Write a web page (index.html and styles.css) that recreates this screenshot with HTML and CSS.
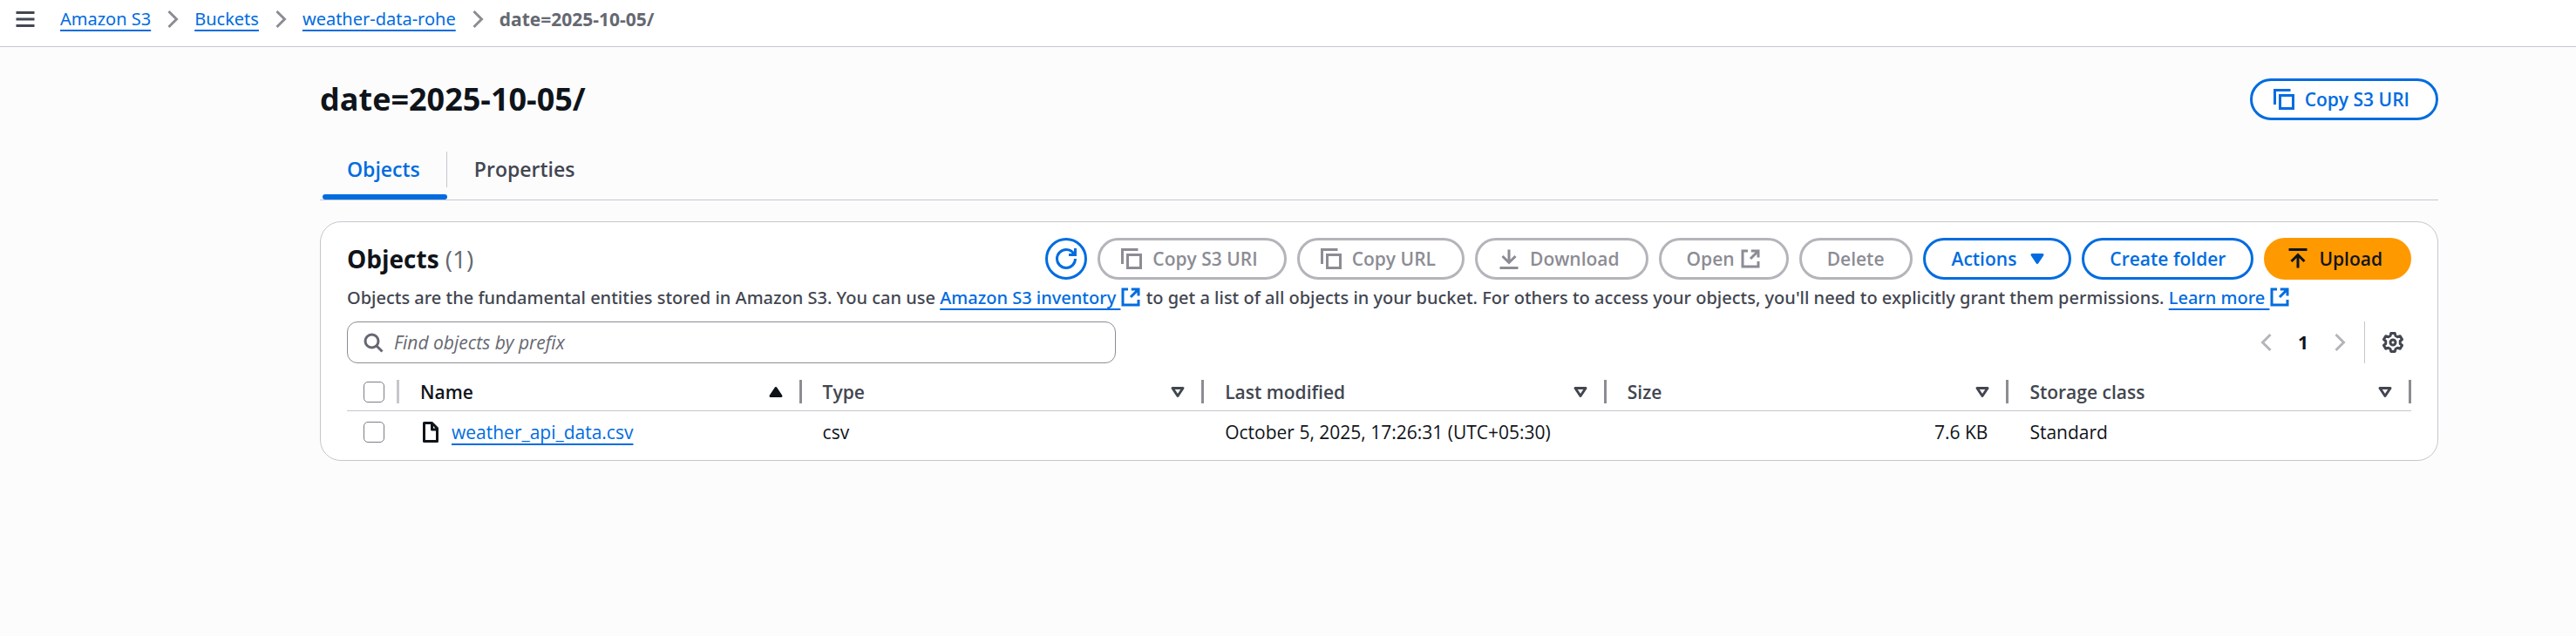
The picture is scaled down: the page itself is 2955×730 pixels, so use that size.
FILE: index.html
```html
<!DOCTYPE html>
<html lang="en">
<head>
<meta charset="utf-8">
<title>date=2025-10-05/ - S3</title>
<link rel="stylesheet" href="styles.css">
</head>
<body>
<svg class="sprite" aria-hidden="true">
  <symbol id="i-copy" viewBox="0 0 16 16"><path d="M1 12V1H13"/><rect x="5" y="5" width="10" height="10"/></symbol>
  <symbol id="i-external" viewBox="0 0 16 16"><path d="M6 2H2v12h12v-4M8.500 2H14v5M14 2L8 8"/></symbol>
  <symbol id="i-refresh" viewBox="0 0 16 16"><path d="M15 8c0 3.870-3.130 7-7 7s-7-3.130-7-7 3.130-7 7-7c2.790 0 5.200 1.630 6.330 4M10 5h5V0"/></symbol>
  <symbol id="i-download" viewBox="0 0 16 16"><path d="M1 15h14M8 1v10M3 6l5 5 5-5"/></symbol>
  <symbol id="i-upload" viewBox="0 0 16 16"><path d="M1 1h14M8 15V5M3 10l5-5 5 5"/></symbol>
  <symbol id="i-next" viewBox="0 0 16 16"><path d="M5 2l6 6-6 6"/></symbol>
  <symbol id="i-prev" viewBox="0 0 16 16"><path d="M11 2L5 8l6 6"/></symbol>
  <symbol id="i-search" viewBox="0 0 16 16"><circle cx="7" cy="7" r="5"/><path d="M15 15l-4.500-4.500"/></symbol>
  <symbol id="i-menu" viewBox="0 0 16 16"><path d="M1 3h14M1 8h14M1 13h14"/></symbol>
  <symbol id="i-file" viewBox="0 0 16 16"><path stroke-linejoin="round" d="M3 1h6l4 4v10H3zM9 1v5h4"/></symbol>
  <symbol id="i-sort" viewBox="0 0 16 16"><path stroke-linejoin="round" d="M4 5h8l-4 6z"/></symbol>
  <symbol id="i-sorted" viewBox="0 0 16 16"><path fill="currentColor" stroke-linejoin="round" d="M4 11h8L8 5z"/></symbol>
  <symbol id="i-caret" viewBox="0 0 16 16"><path fill="currentColor" stroke-linejoin="round" d="M4 5h8l-4 6z"/></symbol>
  <symbol id="i-gear" viewBox="0 0 16 16"><circle cx="8" cy="8" r="2"/><path stroke-linejoin="round" d="M6.500 1h3l.5 2 1.500.8 2-.6 1.500 2.500L13.500 7v2l1.500 1.300-1.500 2.500-2-.6L10 13l-.5 2h-3L6 13l-1.500-.8-2 .6L1 10.300 2.500 9V7L1 5.700l1.500-2.500 2 .6L6 3z"/></symbol>
</svg>

<header class="topbar">
  <button class="icon-button" aria-label="Open navigation"><svg class="icon"><use href="#i-menu"/></svg></button>
  <nav class="crumbs" aria-label="Breadcrumbs">
    <a class="link" href="#">Amazon S3</a><svg class="icon crumb-sep"><use href="#i-next"/></svg>
    <a class="link" href="#">Buckets</a><svg class="icon crumb-sep"><use href="#i-next"/></svg>
    <a class="link" href="#">weather-data-rohe</a><svg class="icon crumb-sep"><use href="#i-next"/></svg>
    <span class="crumb-current">date=2025-10-05/</span>
  </nav>
</header>

<main class="page">
  <div class="page-head">
    <h1 class="title">date=2025-10-05/</h1>
    <button class="btn btn-lead"><svg class="icon"><use href="#i-copy"/></svg>Copy S3 URI</button>
  </div>

  <div class="tabs" role="tablist">
    <button class="tab tab-active" role="tab" aria-selected="true">Objects</button>
    <button class="tab" role="tab" aria-selected="false">Properties</button>
  </div>

  <section class="card">
    <div class="card-head">
      <h2 class="card-title">Objects <span class="count">(1)</span></h2>
      <div class="actions">
        <button class="btn btn-round" aria-label="Refresh"><svg class="icon"><use href="#i-refresh"/></svg></button>
        <button class="btn btn-lead" disabled><svg class="icon"><use href="#i-copy"/></svg>Copy S3 URI</button>
        <button class="btn btn-lead" disabled><svg class="icon"><use href="#i-copy"/></svg>Copy URL</button>
        <button class="btn btn-lead" disabled><svg class="icon"><use href="#i-download"/></svg>Download</button>
        <button class="btn btn-tight" disabled>Open<svg class="icon"><use href="#i-external"/></svg></button>
        <button class="btn" disabled>Delete</button>
        <button class="btn btn-menu">Actions<svg class="icon"><use href="#i-caret"/></svg></button>
        <button class="btn">Create folder</button>
        <button class="btn btn-lead btn-primary"><svg class="icon"><use href="#i-upload"/></svg>Upload</button>
      </div>
    </div>
    <p class="description">Objects are the fundamental entities stored in Amazon S3. You can use <a class="ext" href="#"><span class="link">Amazon S3 inventory&nbsp;</span><svg class="icon"><use href="#i-external"/></svg></a> to get a list of all objects in your bucket. For others to access your objects, you'll need to explicitly grant them permissions. <a class="ext" href="#"><span class="link">Learn more&nbsp;</span><svg class="icon"><use href="#i-external"/></svg></a></p>

    <div class="tools">
      <label class="search">
        <svg class="icon"><use href="#i-search"/></svg>
        <input class="search-input" type="search" placeholder="Find objects by prefix" aria-label="Find objects by prefix">
      </label>
      <div class="pager">
        <button class="icon-button pager-arrow" aria-label="Previous page" disabled><svg class="icon"><use href="#i-prev"/></svg></button>
        <button class="page-number" aria-current="page">1</button>
        <button class="icon-button pager-arrow" aria-label="Next page" disabled><svg class="icon"><use href="#i-next"/></svg></button>
        <div class="prefs"><button class="icon-button" aria-label="Preferences"><svg class="icon"><use href="#i-gear"/></svg></button></div>
      </div>
    </div>

    <table class="table">
      <colgroup><col class="col-check"><col><col><col><col><col></colgroup>
      <thead>
        <tr>
          <th class="check-cell"><div class="th check-th"><input class="check" type="checkbox" aria-label="Select all objects"></div></th>
          <th class="sorted"><div class="th">Name<svg class="icon"><use href="#i-sorted"/></svg></div></th>
          <th><div class="th">Type<svg class="icon"><use href="#i-sort"/></svg></div></th>
          <th><div class="th">Last modified<svg class="icon"><use href="#i-sort"/></svg></div></th>
          <th><div class="th">Size<svg class="icon"><use href="#i-sort"/></svg></div></th>
          <th><div class="th">Storage class<svg class="icon"><use href="#i-sort"/></svg></div></th>
        </tr>
      </thead>
      <tbody>
        <tr>
          <td class="check-cell"><input class="check" type="checkbox" aria-label="Select weather_api_data.csv"></td>
          <td><div class="file"><svg class="icon"><use href="#i-file"/></svg><a class="link" href="#">weather_api_data.csv</a></div></td>
          <td>csv</td>
          <td>October 5, 2025, 17:26:31 (UTC+05:30)</td>
          <td class="num">7.6 KB</td>
          <td>Standard</td>
        </tr>
      </tbody>
    </table>
  </section>
</main>
</body>
</html>
```
FILE: styles.css
```css
:root {
  --blue: #006ce0;
  --ink: #0f141a;
  --body: #424650;
  --muted: #656871;
  --line: #c6c6cd;
}

* { box-sizing: border-box; }

body {
  margin: 0;
  background: #fcfcfd;
  color: var(--ink);
  font: 21px/30px "Open Sans", "Noto Sans", sans-serif;
}

button, input { font: inherit; color: inherit; }
button { cursor: pointer; }
button:disabled { cursor: default; }

.sprite { position: absolute; width: 0; height: 0; }

.icon {
  flex: none;
  width: 24px;
  height: 24px;
  fill: none;
  stroke: currentColor;
  stroke-width: 2;
}

.icon-button {
  display: flex;
  padding: 0;
  border: 0;
  background: none;
  color: var(--body);
}

.link {
  color: var(--blue);
  text-decoration: underline;
  text-decoration-thickness: 2px;
  text-underline-offset: 5px;
  text-decoration-skip-ink: none;
}

/* Top bar */
.topbar {
  display: flex;
  align-items: center;
  gap: 28px;
  height: 54px;
  padding: 0 17px 9px;
  background: #fff;
  border-bottom: 1px solid var(--line);
}
.crumbs {
  display: flex;
  align-items: center;
  gap: 13px;
  font-family: "Noto Sans", sans-serif;
  font-size: 20px;
}
.crumb-sep { color: #8c8c94; }
.crumb-current { color: var(--muted); font-family: "Open Sans", sans-serif; font-size: 21px; font-weight: 700; }

/* Page */
.page { padding: 36px 158px 0 367px; }
.page-head { display: flex; align-items: center; justify-content: space-between; }
.title { margin: 0; font-size: 36px; line-height: 46px; font-weight: 700; }

.btn {
  display: flex;
  align-items: center;
  gap: 12px;
  height: 48px;
  padding: 0 29px;
  border: 3px solid var(--blue);
  border-radius: 24px;
  background: #fff;
  color: var(--blue);
  font-weight: 600;
  white-space: nowrap;
}
.btn-lead { padding: 0 30px 0 24px; }
.btn-menu { padding: 0 24px 0 30px; }
.btn:disabled { border-color: #b4b4bb; color: #8c8c94; }
.btn-round { width: 48px; padding: 0; justify-content: center; }
.btn-tight { gap: 6px; }
.btn-primary { background: #f90; border-color: #f90; color: var(--ink); }

/* Tabs */
.tabs { display: flex; margin-top: 36px; border-bottom: 1px solid var(--line); }
.tab {
  position: relative;
  padding: 5px 31px 20px;
  border: 0;
  background: none;
  color: var(--body);
  font-size: 23px;
  font-weight: 600;
}
.tab-active { color: var(--blue); }
.tab-active::before {
  content: "";
  position: absolute;
  top: 0;
  right: 0;
  bottom: 14px;
  border-right: 1px solid var(--line);
}
.tab-active::after {
  content: "";
  position: absolute;
  left: 3px;
  right: 0;
  bottom: 0;
  height: 6px;
  border-radius: 3px;
  background: var(--blue);
}

/* Objects card */
.card {
  margin-top: 24px;
  padding: 18px 30px 8px;
  border: 1px solid var(--line);
  border-radius: 24px;
  background: #fff;
}
.card-head { display: flex; align-items: center; justify-content: space-between; }
.card-title { margin: 0; font-size: 28px; line-height: 36px; font-weight: 700; }
.count { color: var(--muted); font-weight: 400; }
.actions { display: flex; gap: 12px; }
.description {
  margin: 6px 0 0;
  color: var(--body);
  font-family: "Noto Sans", sans-serif;
  font-size: 20px;
  font-weight: 500;
}
.ext { color: var(--blue); text-decoration: none; white-space: nowrap; }
.ext .icon { vertical-align: -4px; }

.tools { display: flex; justify-content: space-between; align-items: center; margin-top: 12px; }
.search {
  display: flex;
  align-items: center;
  gap: 12px;
  flex: 0 1 882px;
  height: 48px;
  padding: 0 17px;
  border: 1px solid #8c8c94;
  border-radius: 12px;
  background: #fff;
  color: var(--muted);
}
.search-input { flex: 1; padding: 0; border: 0; outline: 0; background: none; }
.search-input::placeholder { color: var(--muted); font-style: italic; opacity: 1; }
.pager { display: flex; align-items: center; }
.pager-arrow:disabled { color: #b4b4bb; }
.page-number { width: 60px; padding: 0; border: 0; background: none; font-weight: 700; }
.prefs {
  display: flex;
  align-items: center;
  height: 48px;
  margin-left: 16px;
  padding: 0 9px 0 20px;
  border-left: 1px solid var(--line);
}

/* Table */
.table { width: 100%; margin-top: 12px; border-collapse: collapse; table-layout: fixed; }
.col-check { width: 60px; }
.table th { padding: 7px 0 8px; border-bottom: 1px solid var(--line); color: var(--body); font-weight: 600; text-align: left; }
.table .sorted { color: var(--ink); }
.th {
  display: flex;
  align-items: center;
  justify-content: space-between;
  height: 27px;
  padding: 0 15px 0 24px;
  border-right: 3px solid #8c8c94;
}
.check-th { padding: 0 0 0 19px; border-color: var(--line); }
.table td { padding: 9px 24px; }
.table td.check-cell { padding: 0 0 0 19px; }
.table .num { text-align: right; }
.check {
  appearance: none;
  display: block;
  width: 24px;
  height: 24px;
  margin: 0;
  border: 1px solid #7d7d86;
  border-radius: 5px;
  background: #fff;
}
.file { display: flex; align-items: center; gap: 12px; }
```
